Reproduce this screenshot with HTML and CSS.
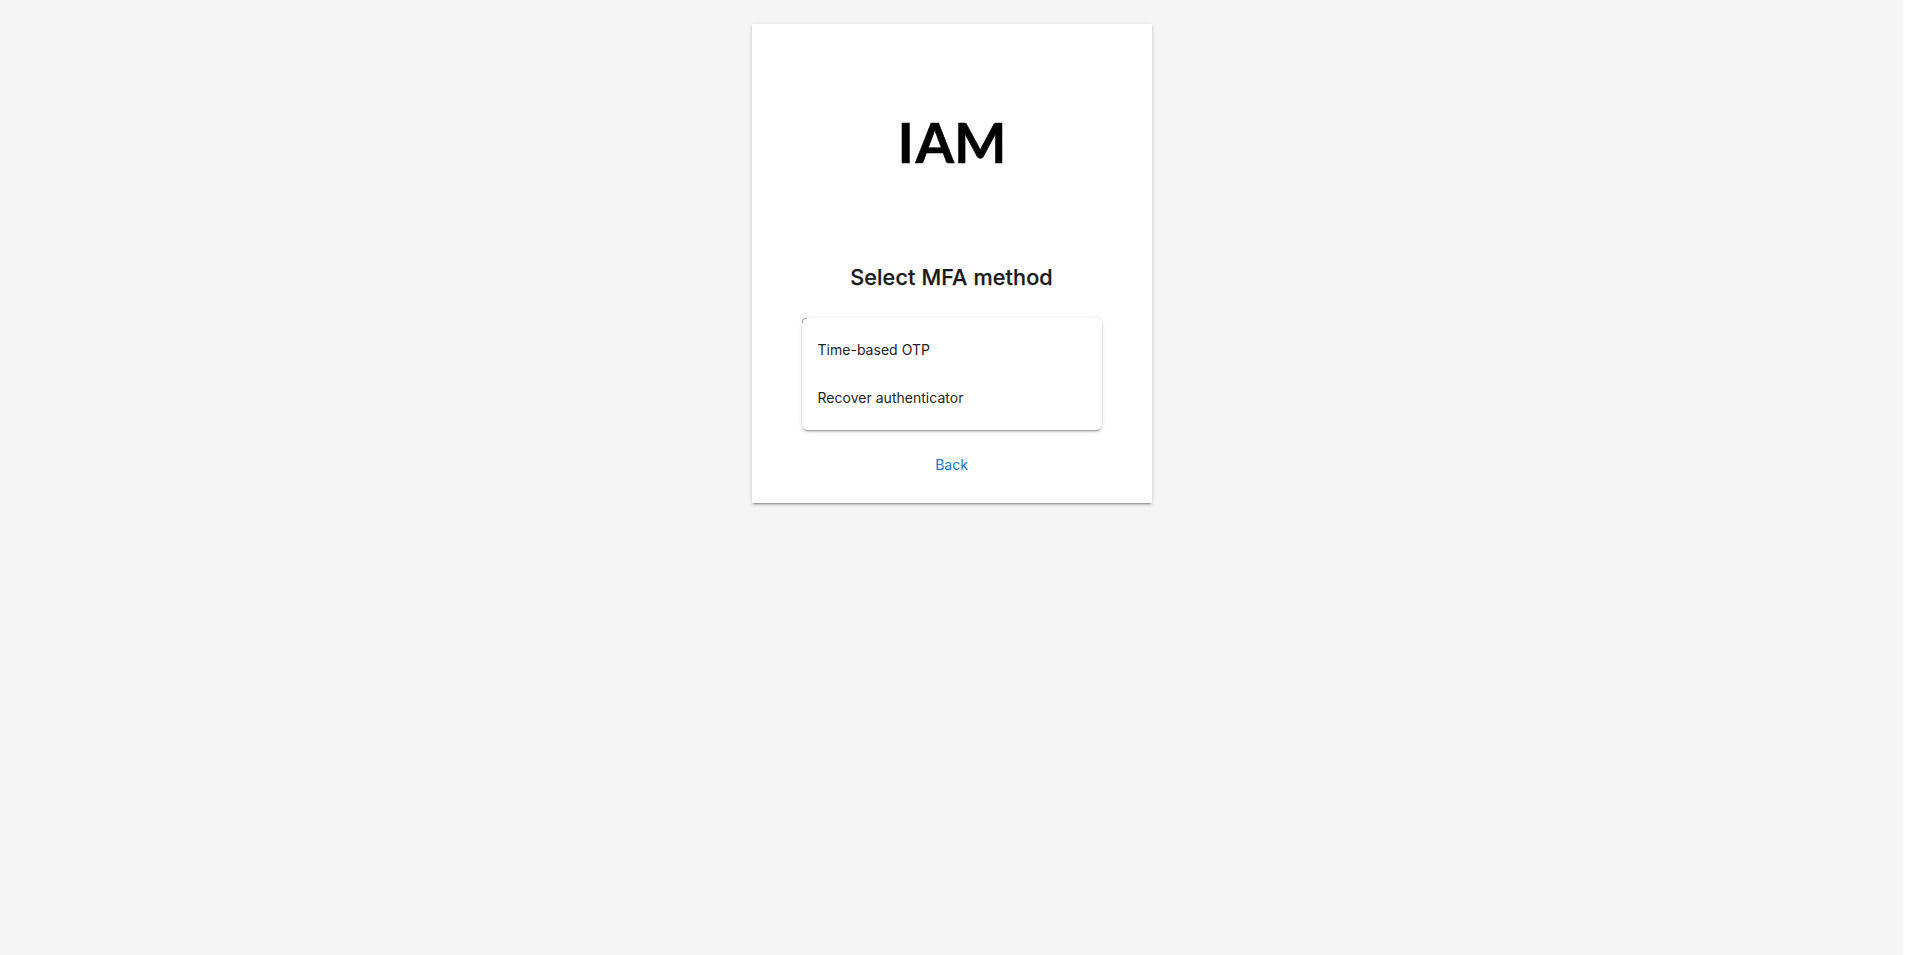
FILE: index.html
```html
<!DOCTYPE html>
<html lang="en">
<head>
<meta charset="utf-8">
<title>Select MFA method</title>
<link rel="stylesheet" href="styles.css">
</head>
<body>
<div class="page">
<main class="card">
<svg class="logo" viewBox="0 0 200 200" role="img" aria-label="IAM"><text class="logo-text" x="45.5 63.5 102" y="118.5">IAM</text></svg>
<h1 class="title">Select MFA method</h1>
<ul class="methods">
<li class="method">Time-based OTP</li>
<li class="method">Recover authenticator</li>
</ul>
<a class="back" href="#">Back</a>
</main>
</div>
</body>
</html>
```
FILE: styles.css
```css
* { box-sizing: border-box; }
body { margin: 0; background: #fff; font-family: Inter, sans-serif; color: rgba(0,0,0,.9); }
.page { width: calc(100% - 17px); min-height: 100vh; padding-top: 24px; background: #f5f5f5; }
.card { width: 400px; height: 479px; margin: 0 auto; padding: 20px 50px 0; background: #fff; display: flex; flex-direction: column; align-items: center; box-shadow: 0 3px 1px -2px rgba(0,0,0,.2), 0 2px 2px rgba(0,0,0,.14), 0 1px 5px rgba(0,0,0,.12); }
.logo { width: 200px; height: 200px; flex: none; }
.logo-text { font: 700 55.5px Lato, sans-serif; fill: #000; stroke: #000; stroke-width: .5px; }
.title { margin: 13px 0 0; font-size: 21.6px; font-weight: 500; line-height: 40px; letter-spacing: .13px; color: #1a1a1a; -webkit-text-stroke: .25px #1a1a1a; }
.methods { position: relative; list-style: none; width: 300px; margin: 21px 0 0; padding: 8px 0; border-radius: 6px; box-shadow: 0 3px 1px -2px rgba(0,0,0,.2), 0 2px 2px rgba(0,0,0,.14), 0 1px 5px rgba(0,0,0,.12); }
/* Thin arc on the rounded top-left corner */
.methods::before { content: ""; position: absolute; left: 0; top: 0; width: 4px; height: 4px; border: solid rgba(0,0,0,.35); border-width: 1px 0 0 1px; border-radius: 4px 0 0 0; }
.method { height: 48px; padding: 0 16px; font-size: 14px; line-height: 48px; letter-spacing: .02px; }
.back { margin-top: 25px; font-size: 14px; line-height: 20px; color: #1976d2; text-decoration: none; }
```
